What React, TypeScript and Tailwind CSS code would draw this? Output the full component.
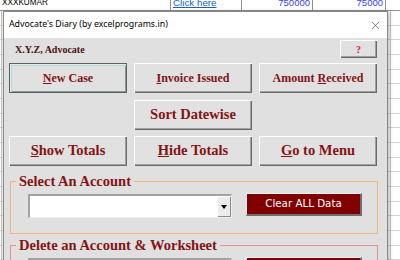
import React from 'react';
import { X } from 'lucide-react';

const raised =
    'bg-[#e1e1e1] shadow-[inset_1px_1px_0_#ffffff,inset_-1px_-1px_0_#6b6b6b,inset_-2px_-2px_0_#a0a0a0]';

const Btn = ({ children, className = '' }: { children: React.ReactNode; className?: string }) => (
    <div
        className={`flex items-center justify-center h-[30px] font-['Liberation_Serif',serif] font-bold text-[#841414] ${className}`}
    >
        {children}
    </div>
);

const Combo = () => (
    <div className="flex w-[204px] h-[24px] bg-white border-t-2 border-l-2 border-t-[#a3a3a3] border-l-[#a3a3a3] border-b border-r border-b-[#f0f0f0] border-r-[#f0f0f0]">
        <div className="flex-1" />
        <div className="flex items-center justify-center w-[14px] h-full bg-[#ececec] shadow-[inset_1px_1px_0_#ffffff,inset_-1px_-1px_0_#8a8a8a]">
            <svg width="6" height="4" viewBox="0 0 6 4">
                <path d="M0 0H6L3 4Z" fill="#000" />
            </svg>
        </div>
    </div>
);

const RedBtn = ({ label }: { label: string }) => (
    <div className="flex items-center justify-center w-[116px] h-[23px] -mt-[1px] bg-[#800000] border-t border-l border-t-[#f4f4f4] border-l-[#f4f4f4] border-b-2 border-r-2 border-b-[#6e6e6e] border-r-[#6e6e6e] font-['Comic_Sans_MS','DejaVu_Sans',sans-serif] text-[10.3px] text-white">
        {label}
    </div>
);

const Group = ({ title, border, children }: { title: string; border: string; children?: React.ReactNode }) => (
    <fieldset className={`ml-[6px] w-[368px] border ${border} pb-[15px]`}>
        <legend className="ml-[5px] px-[3px] font-['Liberation_Serif',serif] font-bold text-[14.5px] leading-[18px] text-[#841414]">
            {title}
        </legend>
        {children}
    </fieldset>
);

export default function App() {
    return (
        <div className="relative w-[400px] h-[260px] overflow-hidden bg-white font-['Liberation_Sans',sans-serif]">
            {/* Sheet behind the form */}
            <div className="flex h-[11px] overflow-hidden border-b border-[#8f8f8f] leading-[13px]">
                <div className="w-[171px] border-r border-[#8f8f8f] pl-[2px] -mt-[4px] text-[8.2px] text-black">XXXKUMAR</div>
                <div className="w-[71px] border-r border-[#8f8f8f] pl-[2px] -mt-[4px] text-[9.8px] text-[#1464c8] underline">Click here</div>
                <div className="w-[71px] border-r border-[#8f8f8f] pr-[2px] -mt-[4px] text-right text-[9.5px] text-[#3a3aff]">750000</div>
                <div className="w-[73px] border-r border-[#8f8f8f] pr-[2px] -mt-[4px] text-right text-[9.5px] text-[#3a3aff]">75000</div>
                <div className="flex-1" />
            </div>
            <div className="flex h-[249px] bg-[repeating-linear-gradient(to_bottom,transparent_0,transparent_13.67px,#d4d4d4_13.67px,#d4d4d4_14.67px)]">
                <div className="w-[2px] border-r border-[#c8c8c8]" />
                <div className="w-[388px]" />
                <div className="flex-1 border-l border-[#c8c8c8]" />
            </div>

            {/* UserForm window */}
            <div className="absolute left-[3px] top-[11px] w-[385px] h-[270px] border border-[#8a8a8a] bg-[#e0e0e0] shadow-[1px_1px_4px_rgba(0,0,0,0.35)]">
                <div className="flex items-center justify-between h-[26px] bg-white pl-[5px] pr-[5px]">
                    <span className="font-['Noto_Sans',sans-serif] text-[8.8px] text-black">
                        Advocate's Diary (by excelprograms.in)
                    </span>
                    <X size={13} strokeWidth={1.1} color="#3c3c3c" />
                </div>

                <div className="flex items-center justify-between h-[18px] mt-[2px] pl-[11px] pr-[10px]">
                    <span className="font-['Liberation_Serif',serif] font-bold text-[10px] text-[#4a1212]">
                        X.Y.Z, Advocate
                    </span>
                    <div className={`flex items-center justify-center w-[37px] h-[18px] ${raised} font-['Liberation_Serif',serif] font-bold text-[10px] text-[#e0201e]`}>
                        ?
                    </div>
                </div>

                <div className="flex gap-[7px] mt-[5px] pl-[5px]">
                    <Btn className="w-[118px] text-[12px] bg-[#e1e1e1] border border-[#5f5f5f] shadow-[inset_1px_1px_0_#d9f0f0,inset_2px_2px_0_#b9d5d5,inset_-1px_-1px_0_#7f9c9c]">
                        <span><span className="underline">N</span>ew Case</span>
                    </Btn>
                    <Btn className={`w-[118px] text-[12px] ${raised}`}>
                        <span><span className="underline">I</span>nvoice Issued</span>
                    </Btn>
                    <Btn className={`w-[118px] text-[12px] ${raised}`}>
                        <span>Amount <span className="underline">R</span>eceived</span>
                    </Btn>
                </div>

                <div className="flex mt-[7px] pl-[130px]">
                    <Btn className={`w-[118px] text-[14.5px] ${raised}`}>Sort Datewise</Btn>
                </div>

                <div className="flex gap-[7px] mt-[6px] pl-[5px]">
                    <Btn className={`w-[118px] text-[14.5px] ${raised}`}>
                        <span><span className="underline">S</span>how Totals</span>
                    </Btn>
                    <Btn className={`w-[118px] text-[14.5px] ${raised}`}>
                        <span><span className="underline">H</span>ide Totals</span>
                    </Btn>
                    <Btn className={`w-[118px] text-[14.5px] ${raised}`}>
                        <span><span className="underline">G</span>o to Menu</span>
                    </Btn>
                </div>

                <div className="mt-[6px]">
                    <Group title="Select An Account" border="border-[#f5b47a]">
                        <div className="flex items-start gap-[14px] mt-[4px] pl-[17px]">
                            <Combo />
                            <RedBtn label="Clear ALL Data" />
                        </div>
                    </Group>
                </div>

                <div className="mt-[2px]">
                    <Group title="Delete an Account & Worksheet" border="border-[#f08c8c]">
                        <div className="flex items-start gap-[14px] mt-[4px] pl-[17px]">
                            <Combo />
                            <RedBtn label="Delete Account" />
                        </div>
                    </Group>
                </div>
            </div>
        </div>
    );
}
